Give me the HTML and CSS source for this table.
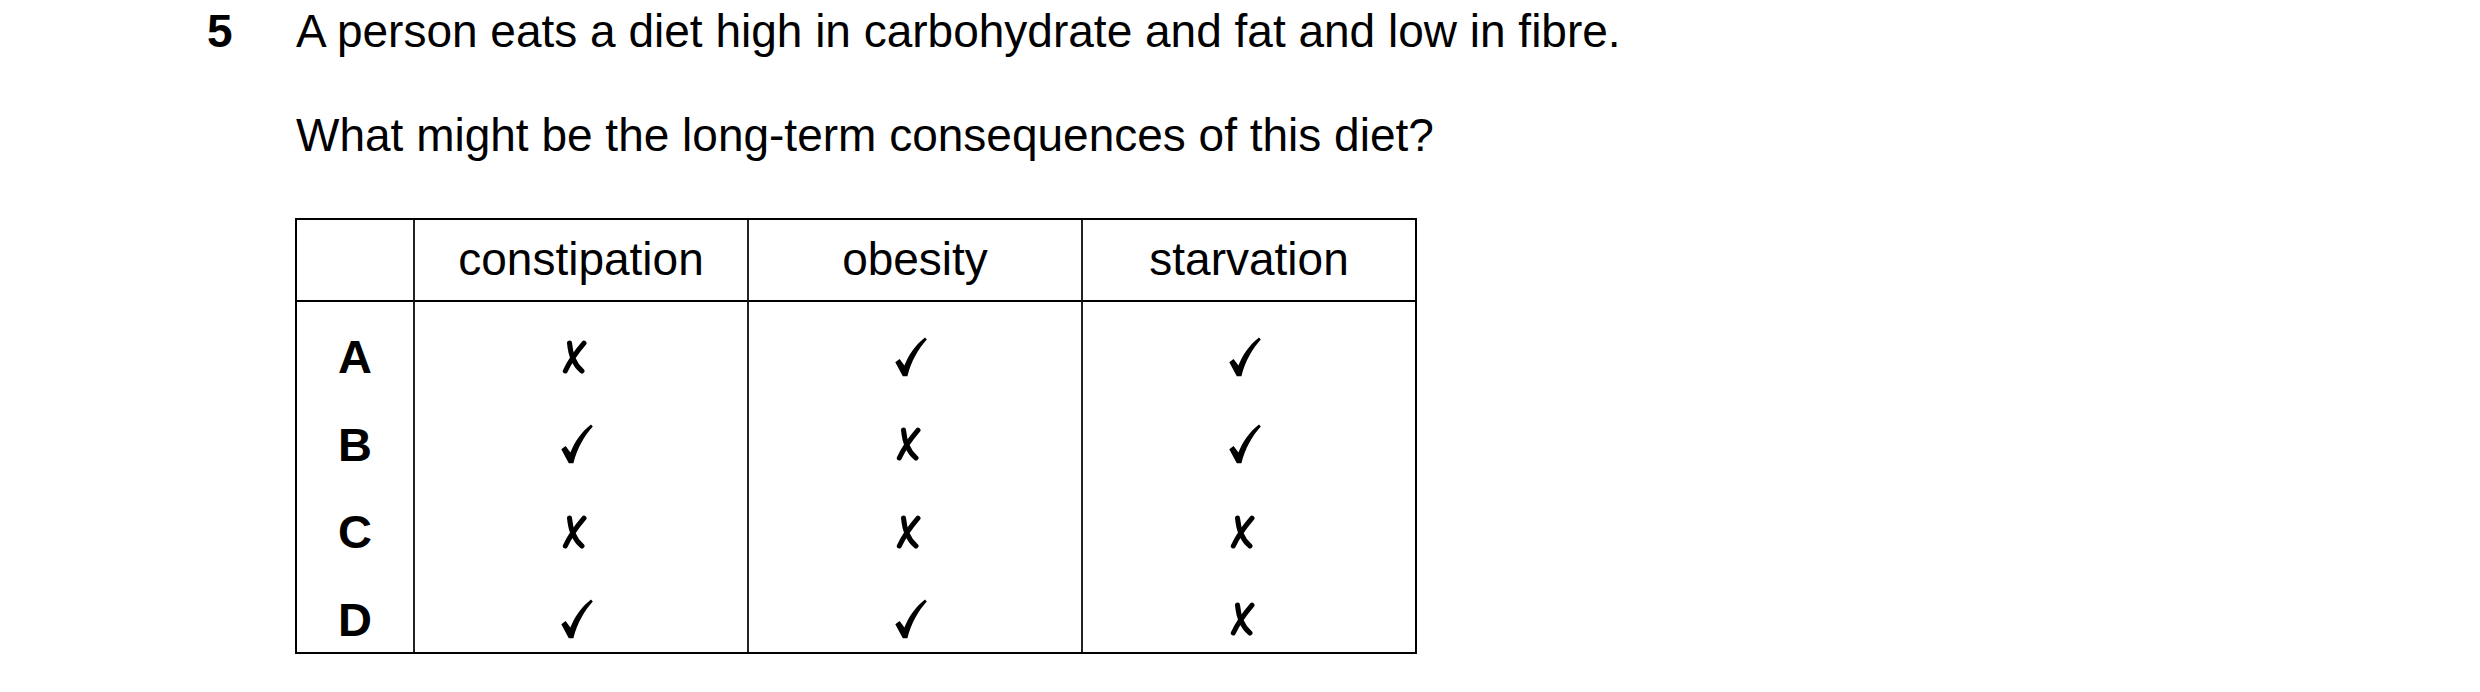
FILE: index.html
```html
<!DOCTYPE html>
<html lang="en">
<head>
<meta charset="utf-8">
<title>Question 5</title>
<link rel="stylesheet" href="styles.css">
</head>
<body>
<svg class="defs" width="0" height="0" aria-hidden="true">
  <defs>
    <symbol id="tick" viewBox="0 0 32 40">
      <path d="M0.3 25.2 L4.6 22 L9.4 28.6 C13.5 18 20.2 7.8 30 0.4 L31.8 2.6 C23.2 12 16.4 24 12.4 39.2 L7.8 39.2 Z" fill="#000"/>
    </symbol>
    <symbol id="cross" viewBox="0 0 24 34">
      <path d="M7 3 C8 14 12 25 19.5 31" fill="none" stroke="#000" stroke-width="5" stroke-linecap="round"/>
      <path d="M21.5 3.2 C14 12 7 22 2.8 31" fill="none" stroke="#000" stroke-width="5" stroke-linecap="round"/>
    </symbol>
  </defs>
</svg>
<div class="question">
  <div class="qnum">5</div>
  <div class="qbody">
    <p class="stem">A person eats a diet high in carbohydrate and fat and low in fibre.</p>
    <p class="prompt">What might be the long-term consequences of this diet?</p>
    <div class="grid">
      <div class="cell head"></div>
      <div class="cell head">constipation</div>
      <div class="cell head">obesity</div>
      <div class="cell head">starvation</div>

      <div class="cell key first">A</div>
      <div class="cell mark first"><svg class="x"><use href="#cross"/></svg></div>
      <div class="cell mark first"><svg class="v"><use href="#tick"/></svg></div>
      <div class="cell mark first"><svg class="v"><use href="#tick"/></svg></div>

      <div class="cell key">B</div>
      <div class="cell mark"><svg class="v"><use href="#tick"/></svg></div>
      <div class="cell mark"><svg class="x"><use href="#cross"/></svg></div>
      <div class="cell mark"><svg class="v"><use href="#tick"/></svg></div>

      <div class="cell key">C</div>
      <div class="cell mark"><svg class="x"><use href="#cross"/></svg></div>
      <div class="cell mark"><svg class="x"><use href="#cross"/></svg></div>
      <div class="cell mark"><svg class="x"><use href="#cross"/></svg></div>

      <div class="cell key">D</div>
      <div class="cell mark"><svg class="v"><use href="#tick"/></svg></div>
      <div class="cell mark"><svg class="v"><use href="#tick"/></svg></div>
      <div class="cell mark"><svg class="x"><use href="#cross"/></svg></div>
    </div>
  </div>
</div>
</body>
</html>
```
FILE: styles.css
```css
html, body {
  margin: 0;
  padding: 0;
  background: #fff;
}
body {
  width: 2480px;
  height: 692px;
  overflow: hidden;
  font-family: "Liberation Sans", Arial, sans-serif;
  color: #000;
}
.defs {
  position: absolute;
  width: 0;
  height: 0;
}
.question {
  display: flex;
  padding-left: 207px;
  padding-top: 5px;
}
.qnum {
  flex: 0 0 89px;
  font-weight: bold;
  font-size: 46px;
  line-height: 52px;
}
.qbody {
  display: flex;
  flex-direction: column;
  align-items: flex-start;
}
.stem, .prompt {
  margin: 0;
  font-size: 46px;
  line-height: 52px;
  white-space: nowrap;
}
.prompt {
  margin-top: 52px;
}
.grid {
  margin-top: 57px;
  margin-left: -1px;
  display: grid;
  grid-template-columns: 116px 334px 334px 334px;
  grid-template-rows: 82px repeat(4, 87.5px);
  border: 2px solid #000;
}
.cell {
  display: flex;
  align-items: center;
  justify-content: center;
  border-left: 2px solid #222;
}
.cell:nth-child(4n+1) {
  border-left: none;
}
.head {
  font-size: 46px;
  border-bottom: 2px solid #000;
  padding-bottom: 2px;
}
.key {
  font-weight: bold;
  font-size: 47px;
  padding-top: 22px;
}
.mark {
  padding-top: 22px;
}
.mark svg.v {
  width: 32px;
  height: 40px;
  margin-right: 8px;
}
.mark svg.x {
  width: 25px;
  height: 34px;
  margin-right: 14px;
}
```
